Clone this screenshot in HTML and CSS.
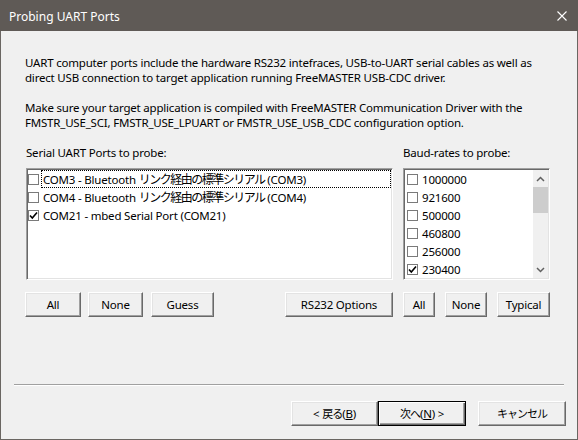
FILE: index.html
```html
<!DOCTYPE html>
<html>
<head>
<meta charset="utf-8">
<link rel="stylesheet" href="styles.css">
</head>
<body>
<div class="window">
  <div class="titlebar">
    <span class="title">Probing UART Ports</span>
    <svg class="close" width="10" height="10" viewBox="0 0 10 10"><path d="M0.5 0.5 L9.5 9.5 M9.5 0.5 L0.5 9.5" stroke="#fff" stroke-width="1.1" fill="none"/></svg>
  </div>
  <div class="body">
    <p class="intro"><span class="line">UART computer ports include the hardware RS232 intefraces, USB-to-UART serial cables as well as</span><span class="line">direct USB connection to target application running FreeMASTER USB-CDC driver.</span></p>
    <p class="intro"><span class="line">Make sure your target application is compiled with FreeMASTER Communication Driver with the</span><span class="line">FMSTR_USE_SCI, FMSTR_USE_LPUART or FMSTR_USE_USB_CDC configuration option.</span></p>
    <div class="probe">
      <div class="col col-ports">
        <div class="label">Serial UART Ports to probe:</div>
        <div class="listbox ports">
          <div class="item"><span class="cb"></span><span class="text focus">COM3 - Bluetooth <span class="jp">リンク経由の標準シリアル</span> (COM3)</span></div>
          <div class="item"><span class="cb"></span><span class="text">COM4 - Bluetooth <span class="jp">リンク経由の標準シリアル</span> (COM4)</span></div>
          <div class="item"><span class="cb checked"><svg width="9" height="9" viewBox="0 0 9 9"><path d="M1 4.5 L3.3 7 L8 1.5" stroke="#000" stroke-width="1.6" fill="none"/></svg></span><span class="text">COM21 - mbed Serial Port (COM21)</span></div>
        </div>
        <div class="btnrow">
          <button class="btn b-all">All</button>
          <button class="btn b-none">None</button>
          <button class="btn b-guess">Guess</button>
          <button class="btn b-rs">RS232 Options</button>
        </div>
      </div>
      <div class="col col-baud">
        <div class="label">Baud-rates to probe:</div>
        <div class="listbox baud">
          <div class="baud-items">
            <div class="item"><span class="cb"></span><span class="text">1000000</span></div>
            <div class="item"><span class="cb"></span><span class="text">921600</span></div>
            <div class="item"><span class="cb"></span><span class="text">500000</span></div>
            <div class="item"><span class="cb"></span><span class="text">460800</span></div>
            <div class="item"><span class="cb"></span><span class="text">256000</span></div>
            <div class="item"><span class="cb checked"><svg width="9" height="9" viewBox="0 0 9 9"><path d="M1 4.5 L3.3 7 L8 1.5" stroke="#000" stroke-width="1.6" fill="none"/></svg></span><span class="text">230400</span></div>
          </div>
          <div class="scrollbar">
            <div class="arrow"><svg width="9" height="6" viewBox="0 0 9 6"><path d="M1 5 L4.5 1.5 L8 5" stroke="#606060" stroke-width="1.5" fill="none"/></svg></div>
            <div class="thumb"></div>
            <div class="track"></div>
            <div class="arrow"><svg width="9" height="6" viewBox="0 0 9 6"><path d="M1 1 L4.5 4.5 L8 1" stroke="#606060" stroke-width="1.5" fill="none"/></svg></div>
          </div>
        </div>
        <div class="btnrow">
          <button class="btn b-all2">All</button>
          <button class="btn b-none2">None</button>
          <button class="btn b-typ">Typical</button>
        </div>
      </div>
    </div>
    <div class="sep"></div>
    <div class="footer">
      <button class="btn b-back">&lt; <span class="jp">戻る</span>(<u>B</u>)</button>
      <button class="btn default b-next"><span class="jp">次へ</span>(<u>N</u>) &gt;</button>
      <button class="btn b-cancel"><span class="jp">キャンセル</span></button>
    </div>
  </div>
</div>
</body>
</html>
```

FILE: styles.css
```css
html, body {
  margin: 0;
  padding: 0;
  background: #f0f0f0;
}
body {
  font-family: "Noto Sans", "Noto Sans CJK JP", sans-serif;
  font-size: 11.5px;
  color: #000;
}
.window {
  width: 578px;
  height: 440px;
  box-sizing: border-box;
  border: 1px solid #6a6662;
  border-top: 0;
  display: flex;
  flex-direction: column;
  background: #f0f0f0;
}
.titlebar {
  height: 31px;
  background: #5f5a56;
  display: flex;
  align-items: center;
  margin: 0 -1px;
  padding: 0 11px 0 9px;
}
.title {
  flex: 1;
  color: #fff;
  font-size: 12px;
  line-height: 15px;
  padding-top: 1px;
}
.close {
  display: block;
}
.body {
  flex: 1;
  padding: 24px 12px 0 24px;
  display: flex;
  flex-direction: column;
}
.intro {
  margin: 0 0 15px 0;
  white-space: nowrap;
  letter-spacing: -0.2px;
  display: flex;
  flex-direction: column;
}
.line {
  display: block;
  height: 15px;
  line-height: 15px;
}
.probe {
  display: flex;
  gap: 10px;
}
.col {
  display: flex;
  flex-direction: column;
}
.col-ports { width: 368px; }
.col-baud { width: 147px; }
.label {
  line-height: 15px;
  height: 15px;
  margin-bottom: 8px;
  white-space: nowrap;
  letter-spacing: -0.2px;
}
.col-ports .label { padding-left: 1px; }
.listbox {
  height: 112px;
  box-sizing: border-box;
  background: #fff;
  border: 1px solid;
  border-color: #a0a0a0 #fff #fff #a0a0a0;
  box-shadow: inset 1px 1px #696969, inset -1px -1px #e3e3e3;
  padding: 1px;
}
.ports {
  margin-left: 1px;
  width: 367px;
}
.baud {
  display: flex;
}
.baud-items {
  flex: 1;
}
.item {
  height: 18px;
  display: flex;
  align-items: center;
  white-space: nowrap;
}
.cb {
  width: 11px;
  height: 11px;
  box-sizing: border-box;
  border: 1px solid #7a7a7a;
  background: #fff;
  flex: none;
  display: flex;
  align-items: center;
  justify-content: center;
  margin-top: 1px;
}
.baud .cb { margin-left: 2px; }
.text {
  margin-left: 2px;
  border: 1px dotted transparent;
  padding: 0 1px;
  line-height: 15px;
  letter-spacing: -0.2px;
}
.text.focus {
  border-color: #000;
  flex: 1;
}
.jp {
  font-family: "Noto Sans CJK JP", sans-serif;
  font-size: 11px;
  letter-spacing: -1px;
}
.item .jp {
  font-size: 12px;
  letter-spacing: -1.5px;
}
.scrollbar {
  width: 15px;
  flex: none;
  background: #f0f0f0;
  display: flex;
  flex-direction: column;
}
.arrow {
  height: 17px;
  display: flex;
  align-items: center;
  justify-content: center;
}
.thumb {
  height: 26px;
  background: #cdcdcd;
}
.track { flex: 1; }
.btnrow {
  display: flex;
  margin-top: 12px;
  gap: 7px;
}
.col-baud .btnrow { gap: 10px; }
.btn {
  height: 25px;
  box-sizing: border-box;
  background: #f0f0f0;
  border: 1px solid;
  border-color: #fff #696969 #696969 #fff;
  box-shadow: inset -1px -1px #a0a0a0, inset 1px 1px #e3e3e3;
  font-family: "Noto Sans", "Noto Sans CJK JP", sans-serif;
  font-size: 11.5px;
  color: #000;
  padding: 0 0 1px 0;
  white-space: nowrap;
  letter-spacing: -0.2px;
}
.b-all { width: 56px; }
.b-none { width: 55px; }
.b-guess { width: 63px; margin-left: 1px; }
.b-rs { width: 108px; margin-left: auto; }
.b-all2 { width: 32px; }
.b-none2 { width: 42px; }
.b-typ { width: 53px; }
.sep {
  height: 1px;
  border-top: 1px solid #a0a0a0;
  background: #fff;
  margin: 67px 1px 0 -11px;
}
.footer {
  display: flex;
  justify-content: flex-end;
  margin-top: 15px;
  margin-right: -1px;
}
.b-back { width: 87px; }
.b-next { width: 88px; }
.b-cancel { width: 88px; margin-left: 12px; }
.btn.default {
  border-color: #000;
  box-shadow: inset 1px 1px #fff, inset -1px -1px #696969, inset -2px -2px #a0a0a0;
}
.btn u { text-decoration: underline; }
```
